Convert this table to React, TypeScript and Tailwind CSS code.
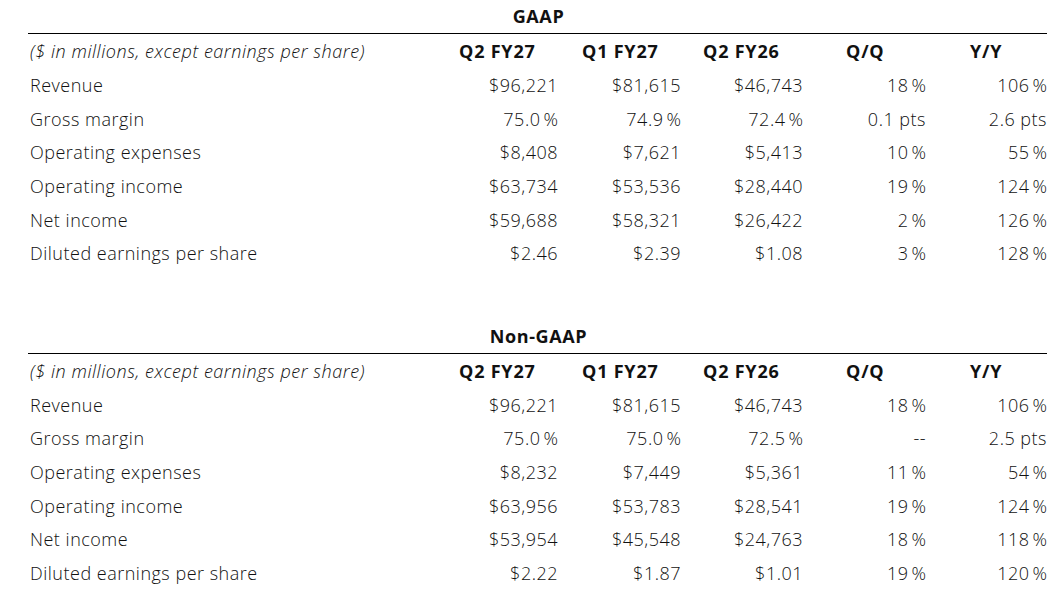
type Row = { label: string; values: string[] };

const gaapRows: Row[] = [
  { label: 'Revenue', values: ['$96,221', '$81,615', '$46,743', '18 %', '106 %'] },
  { label: 'Gross margin', values: ['75.0 %', '74.9 %', '72.4 %', '0.1 pts', '2.6 pts'] },
  { label: 'Operating expenses', values: ['$8,408', '$7,621', '$5,413', '10 %', '55 %'] },
  { label: 'Operating income', values: ['$63,734', '$53,536', '$28,440', '19 %', '124 %'] },
  { label: 'Net income', values: ['$59,688', '$58,321', '$26,422', '2 %', '126 %'] },
  { label: 'Diluted earnings per share', values: ['$2.46', '$2.39', '$1.08', '3 %', '128 %'] },
];

const nonGaapRows: Row[] = [
  { label: 'Revenue', values: ['$96,221', '$81,615', '$46,743', '18 %', '106 %'] },
  { label: 'Gross margin', values: ['75.0 %', '75.0 %', '72.5 %', '--', '2.5 pts'] },
  { label: 'Operating expenses', values: ['$8,232', '$7,449', '$5,361', '11 %', '54 %'] },
  { label: 'Operating income', values: ['$63,956', '$53,783', '$28,541', '19 %', '124 %'] },
  { label: 'Net income', values: ['$53,954', '$45,548', '$24,763', '18 %', '118 %'] },
  { label: 'Diluted earnings per share', values: ['$2.22', '$1.87', '$1.01', '19 %', '120 %'] },
];

const grid = 'grid grid-cols-[407px_122px_123px_122px_123px_122px]';

// percent values sit with a thin space before the sign, like the source table
function Value({ v }: { v: string }) {
  if (v.endsWith(' %')) {
    return (
      <>
        {v.slice(0, -2)}
        <span className="tracking-normal">{'\u2009'}%</span>
      </>
    );
  }
  return <>{v}</>;
}

function Section({ title, rows }: { title: string; rows: Row[] }) {
  return (
    <div className="w-[1019px]">
      <div className="h-[34px] border-b border-black flex items-center justify-center">
        <span className="font-bold tracking-[0.6px] pl-[2px]">{title}</span>
      </div>
      <div className={`${grid} h-[35px] items-center font-bold tracking-[0.8px]`}>
        <div className="pl-[2px] italic font-[350] tracking-[0.55px]">($ in millions, except earnings per share)</div>
        <div className="pl-[24px]">Q2 FY27</div>
        <div className="pl-[25px]">Q1 FY27</div>
        <div className="pl-[23px]">Q2 FY26</div>
        <div className="pl-[44px]">Q/Q</div>
        <div className="pl-[45px]">Y/Y</div>
      </div>
      {rows.map((r) => (
        <div key={r.label} className={`${grid} h-[33.6px] items-center font-[350]`}>
          <div className="pl-[2px] tracking-[0.5px]">{r.label}</div>
          {r.values.map((v, i) => (
            <div key={i} className={`text-right tracking-[0.5px] ${i === 4 ? '' : '-mr-[1px]'}`}>
              <Value v={v} />
            </div>
          ))}
        </div>
      ))}
    </div>
  );
}

export default function App() {
  return (
    <div className="w-[1059px] h-[603px] bg-white text-[#111111] text-[18px] font-['Open_Sans',sans-serif] pl-[28px] overflow-hidden">
      <Section title="GAAP" rows={gaapRows} />
      <div className="mt-[49px]">
        <Section title="Non-GAAP" rows={nonGaapRows} />
      </div>
    </div>
  );
}
